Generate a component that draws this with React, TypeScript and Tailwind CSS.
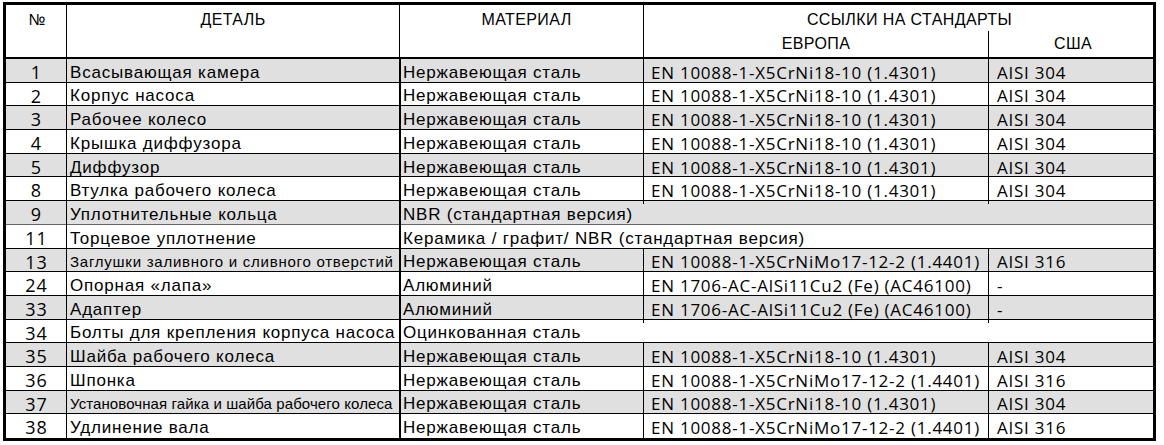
type Row = {
	n: string;
	detail: string;
	detailClass?: string;
	material: string;
	eu?: string;
	us?: string;
};

const rows: Row[] = [
	{ n: '1', detail: 'Всасывающая камера', material: 'Нержавеющая сталь', eu: 'EN 10088-1-X5CrNi18-10 (1.4301)', us: 'AISI 304' },
	{ n: '2', detail: 'Корпус насоса', material: 'Нержавеющая сталь', eu: 'EN 10088-1-X5CrNi18-10 (1.4301)', us: 'AISI 304' },
	{ n: '3', detail: 'Рабочее колесо', material: 'Нержавеющая сталь', eu: 'EN 10088-1-X5CrNi18-10 (1.4301)', us: 'AISI 304' },
	{ n: '4', detail: 'Крышка диффузора', material: 'Нержавеющая сталь', eu: 'EN 10088-1-X5CrNi18-10 (1.4301)', us: 'AISI 304' },
	{ n: '5', detail: 'Диффузор', material: 'Нержавеющая сталь', eu: 'EN 10088-1-X5CrNi18-10 (1.4301)', us: 'AISI 304' },
	{ n: '8', detail: 'Втулка рабочего колеса', material: 'Нержавеющая сталь', eu: 'EN 10088-1-X5CrNi18-10 (1.4301)', us: 'AISI 304' },
	{ n: '9', detail: 'Уплотнительные кольца', material: 'NBR (стандартная версия)' },
	{ n: '11', detail: 'Торцевое уплотнение', material: 'Керамика / графит/ NBR (стандартная версия)' },
	{ n: '13', detail: 'Заглушки заливного и сливного отверстий', detailClass: 'text-[15px] tracking-[0.75px]', material: 'Нержавеющая сталь', eu: 'EN 10088-1-X5CrNiMo17-12-2 (1.4401)', us: 'AISI 316' },
	{ n: '24', detail: 'Опорная «лапа»', material: 'Алюминий', eu: 'EN 1706-AC-AlSi11Cu2 (Fe) (AC46100)', us: '-' },
	{ n: '33', detail: 'Адаптер', material: 'Алюминий', eu: 'EN 1706-AC-AlSi11Cu2 (Fe) (AC46100)', us: '-' },
	{ n: '34', detail: 'Болты для крепления корпуса насоса', material: 'Оцинкованная сталь' },
	{ n: '35', detail: 'Шайба рабочего колеса', material: 'Нержавеющая сталь', eu: 'EN 10088-1-X5CrNi18-10 (1.4301)', us: 'AISI 304' },
	{ n: '36', detail: 'Шпонка', material: 'Нержавеющая сталь', eu: 'EN 10088-1-X5CrNiMo17-12-2 (1.4401)', us: 'AISI 316' },
	{ n: '37', detail: 'Установочная гайка и шайба рабочего колеса', detailClass: 'text-[15px] tracking-[0.1px]', material: 'Нержавеющая сталь', eu: 'EN 10088-1-X5CrNi18-10 (1.4301)', us: 'AISI 304' },
	{ n: '38', detail: 'Удлинение вала', material: 'Нержавеющая сталь', eu: 'EN 10088-1-X5CrNiMo17-12-2 (1.4401)', us: 'AISI 316' },
];

const arial = "font-['Liberation_Sans',Arial,sans-serif]";
const frutiger = "font-['Open_Sans',sans-serif]";
const body = `text-[17px] tracking-[0.8px] whitespace-nowrap ${arial}`;
const code = `text-[17px] tracking-[0.75px] whitespace-nowrap ${frutiger}`;

export default function App() {
	return (
		<div className="bg-white w-[1164px] h-[445px] pl-[3px] pt-[2px]">
			<div className="w-[1153px] border-[3px] border-black text-black">
				{/* header */}
				<div className={`grid grid-cols-[60px_333px_244px_345px_1fr] grid-rows-[26px_26px] border-b-2 border-black text-[16px] tracking-[0.4px] leading-none ${arial}`}>
					<div className="row-span-2 flex justify-center pt-[7px] pl-[2px]">№</div>
					<div className="row-span-2 flex justify-center pt-[7px] border-l border-black">ДЕТАЛЬ</div>
					<div className="row-span-2 flex justify-center pt-[7px] pl-[10px] border-l border-black">МАТЕРИАЛ</div>
					<div className="col-span-2 flex justify-center pt-[7px] pl-[22px] border-l border-black">ССЫЛКИ НА СТАНДАРТЫ</div>
					<div className="flex justify-center items-center border-l border-black">ЕВРОПА</div>
					<div className="flex justify-center items-center pl-[4px] border-l border-black">США</div>
				</div>

				{/* body */}
				{rows.map((r, i) => {
					const shaded = i % 2 === 0;
					const last = i === rows.length - 1;
					const softLine = r.n === '9';
					return (
						<div
							key={r.n}
							className={`grid grid-cols-[60px_333px_244px_345px_1fr] h-[23.7px] ${last ? '' : 'border-b'} ${softLine ? 'border-[#666]' : 'border-black'} ${shaded ? 'bg-[#e0e0e0]' : 'bg-white'}`}
						>
							<div className={`flex items-center justify-center pl-[1px] text-[18px] tracking-[1px] ${frutiger}`}>{r.n}</div>
							<div className={`flex items-center pl-[3px] border-l border-black whitespace-nowrap ${arial} ${r.detailClass ?? 'text-[17px] tracking-[0.8px]'}`}>
								{r.detail}
							</div>
							{r.eu ? (
								<>
									<div className={`flex items-center pl-[2px] border-l-2 border-black ${body}`}>{r.material}</div>
									<div className={`flex items-center pl-[7px] border-l border-black ${code}`}>{r.eu}</div>
									<div className={`flex items-center pl-[8px] border-l border-black ${code}`}>{r.us}</div>
								</>
							) : (
								<div className={`col-span-3 flex items-center pl-[2px] border-l-2 border-black ${body}`}>{r.material}</div>
							)}
						</div>
					);
				})}
			</div>
		</div>
	);
}
